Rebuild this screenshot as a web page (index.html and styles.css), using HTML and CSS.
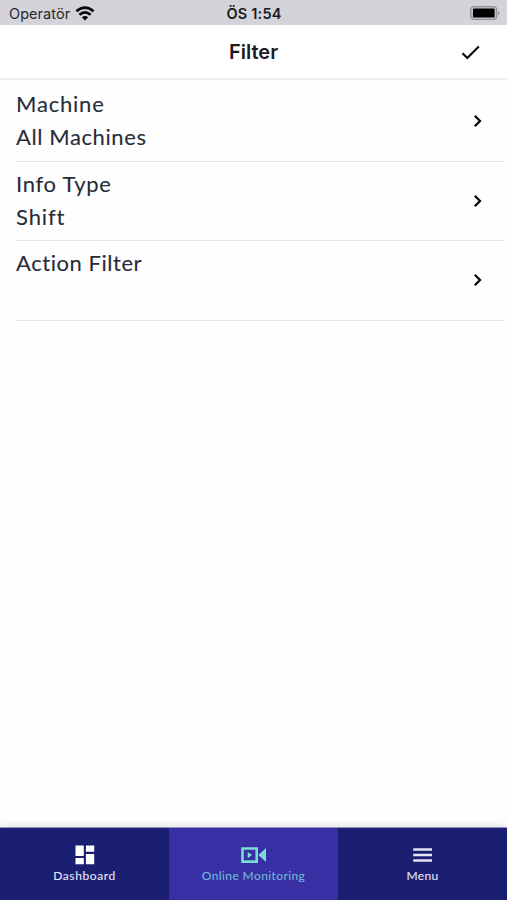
FILE: index.html
```html
<!DOCTYPE html>
<html lang="en">
<head>
<meta charset="utf-8">
<meta name="viewport" content="width=device-width">
<title>Filter</title>
<link rel="stylesheet" href="styles.css">
</head>
<body>
<div class="status">
  <div class="carrier"><span>Operatör</span>
    <svg class="wifi" width="20" height="15" viewBox="0 0 20 15"><g fill="none" stroke="#08080a" stroke-width="2.7"><path d="M1.4 5.2Q10-2 18.6 5.2"/><path d="M4.4 8.7Q10 4 15.6 8.7"/></g><path d="M10 14.4L6.8 11.2Q10 8.8 13.2 11.2Z" fill="#08080a"/></svg>
  </div>
  <div class="clock">ÖS 1:54</div>
  <svg class="battery" width="30" height="15" viewBox="0 0 30 15"><rect x=".7" y=".7" width="26" height="12.8" rx="3.4" fill="#c0c0c3" stroke="#929295" stroke-width="1.2"/><rect x="3" y="2.6" width="21.6" height="9" rx="1.2" fill="#000"/><path d="M28 4.8Q31 7.1 28 9.4Z" fill="#929295"/></svg>
</div>
<header class="header">
  <h1 class="title">Filter</h1>
  <svg class="check" width="20" height="16" viewBox="0 0 20 16"><path d="M1.5 9.2L6.3 14L17.8 2.5" fill="none" stroke="#0b0b0c" stroke-width="2.1"/></svg>
</header>
<main class="list">
  <div class="row"><div class="labels"><div class="machine">Machine</div><div class="all">All Machines</div></div><svg class="chevron" width="10" height="14" viewBox="0 0 10 14"><path d="M1.8 1.8L7 7L1.8 12.2" fill="none" stroke="#0b0b0c" stroke-width="2.3"/></svg></div>
  <div class="row"><div class="labels"><div class="info">Info Type</div><div class="shift">Shift</div></div><svg class="chevron" width="10" height="14" viewBox="0 0 10 14"><path d="M1.8 1.8L7 7L1.8 12.2" fill="none" stroke="#0b0b0c" stroke-width="2.3"/></svg></div>
  <div class="row"><div class="labels"><div class="action">Action Filter</div></div><svg class="chevron" width="10" height="14" viewBox="0 0 10 14"><path d="M1.8 1.8L7 7L1.8 12.2" fill="none" stroke="#0b0b0c" stroke-width="2.3"/></svg></div>
</main>
<nav class="tabs">
  <div class="tab"><svg width="26" height="20" viewBox="0 0 26 20" fill="#fff"><path d="M3.5 .5h8.3v10.6H3.5zM13.9 .5h8.3v6.3h-8.3zM3.5 13h8.3v6.2H3.5zM13.9 8.9h8.3v10.3h-8.3z"/></svg><span class="dash">Dashboard</span></div>
  <div class="tab active"><svg width="26" height="20" viewBox="0 0 26 20" fill="#78dcd2"><path fill-rule="evenodd" d="M.2 2.2H17v15.7H.2zM2.8 4.8v10.5h11.6V4.8z"/><path d="M6.7 6.9l4.5 3.2-4.5 3.2zM25 3v14.1L17.4 10z"/></svg><span class="online">Online Monitoring</span></div>
  <div class="tab"><svg width="26" height="20" viewBox="0 0 26 20" fill="#e4e4f4"><path d="M3.2 3.3H22v2.5H3.2zM3.2 8.8H22v2.5H3.2zM3.2 14.3H22v2.5H3.2z"/></svg><span class="menu">Menu</span></div>
</nav>
</body>
</html>
```
FILE: styles.css
```css
* { box-sizing: border-box; }
body {
  margin: 0;
  height: 900px;
  display: flex;
  flex-direction: column;
  overflow: hidden;
  background: #fefefe;
  font-family: Lato, sans-serif;
}
.status {
  height: 25px;
  flex: none;
  display: grid;
  grid-template-columns: 1fr auto 1fr;
  align-items: center;
  padding: 2px 7px 0 9px;
  background: #d4d3d9;
  color: #1b1b1e;
  font: 14.5px/23px Inter, sans-serif;
}
.carrier { display: flex; align-items: center; gap: 5px; }
.carrier span { letter-spacing: .05px; color: #28282c; }
.clock { font-weight: 600; letter-spacing: .2px; margin-right: 1px; }
.battery { justify-self: end; }
.header {
  height: 55px;
  flex: none;
  display: grid;
  grid-template-columns: 1fr auto 1fr;
  align-items: center;
  border-bottom: 2px solid #f0f0f1;
  background: #fff;
}
.title {
  grid-column: 2;
  margin: 0;
  font: 600 20px/28px Inter, sans-serif;
  letter-spacing: 0;
  color: #1b1b1e;
}
.check { justify-self: end; margin-right: 26px; }
.list { flex: 1; padding: 2px 3px 0 16px; }
.row {
  height: 79.6px;
  display: flex;
  justify-content: space-between;
  align-items: center;
  border-bottom: 1px solid #e6e6e7;
  padding-right: 21px;
}
.labels {
  align-self: flex-start;
  padding-top: 5.2px;
  font-size: 22px;
  line-height: 33px;
  color: #272b38;
  -webkit-text-stroke: .1px #272b38;
  white-space: nowrap;
}
.machine { letter-spacing: .8px; }
.all { letter-spacing: .6px; }
.info { letter-spacing: .7px; }
.shift { letter-spacing: .9px; }
.action { letter-spacing: .55px; }
.tabs {
  height: 73px;
  flex: none;
  display: grid;
  grid-template-columns: 169px 169px 169px;
  border-top: 1px solid #9092bb;
  background: #1b1f72;
  box-shadow: 0 -2px 7px rgba(0, 0, 0, .1);
}
.tab {
  display: flex;
  flex-direction: column;
  align-items: center;
  padding-top: 17px;
  gap: 3px;
  color: #e4e4f4;
  font-size: 12px;
  line-height: 16px;
  -webkit-text-stroke: .1px currentColor;
  white-space: nowrap;
}
.active { background: #372fa3; color: #74b7d8; }
.dash { letter-spacing: .6px; }
.online { letter-spacing: .4px; }
.menu { letter-spacing: .3px; }
```
